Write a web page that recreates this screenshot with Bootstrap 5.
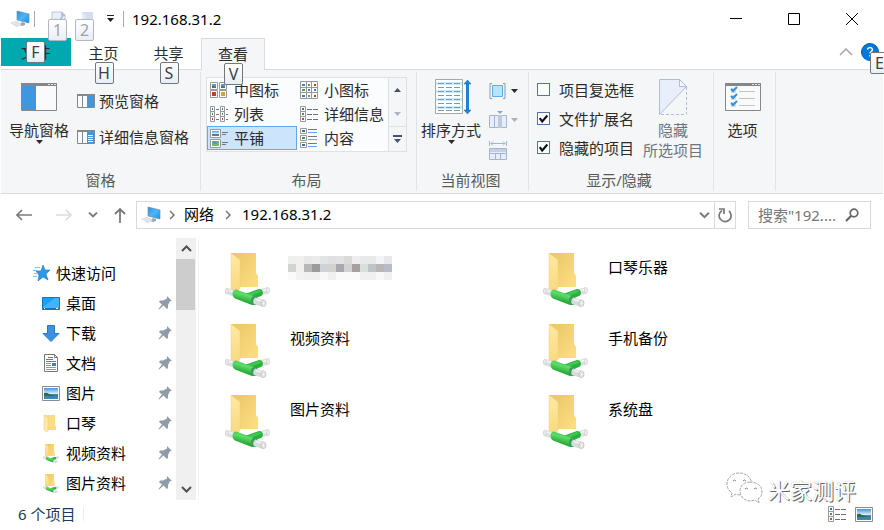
<!DOCTYPE html>
<html lang="zh-CN">
<head>
<meta charset="utf-8">
<meta name="viewport" content="width=device-width, initial-scale=1">
<title>192.168.31.2</title>
<link href="https://cdn.jsdelivr.net/npm/bootstrap@5.3.0/dist/css/bootstrap.min.css" rel="stylesheet">
<style>
body{font:15px/20px "Noto Sans","Noto Sans CJK SC",sans-serif;color:#000;background:#fff}
svg{display:block;flex:none}
.explorer{overflow:clip}
.explorer .btn{--bs-btn-padding-x:0;--bs-btn-padding-y:0;--bs-btn-border-width:0;--bs-btn-border-radius:0;--bs-btn-font-size:15px;--bs-btn-line-height:20px;--bs-btn-color:#2b2b2b;--bs-btn-hover-bg:#e5f1fb;white-space:nowrap}
.explorer .btn:disabled{opacity:1}
.explorer a{color:inherit;text-decoration:none}
/* title bar */
.titlebar{height:38px;padding-left:10px;padding-right:3px}
.vline{width:1px;height:16px;background:#aaa}
.win-btn{width:58px;height:38px}
/* tabs */
.tabs{height:31px;margin:0 1px}
.tabs .btn{width:65px;height:31px;padding-bottom:1px}
.tabs .tab-file{width:70px;height:28px;padding:0;background:#00a8b0}
.tabs .tab-view{width:64px;height:32px;background:#f5f6f7;border:1px solid #dadbdc;border-bottom:0;padding-bottom:2px}
.keytip{position:absolute;width:19px;height:22px;border:1px solid #747779;border-radius:2px;background:linear-gradient(#fff,#e8eef8);font-size:16px;line-height:20px;text-align:center;color:#3c3f45;z-index:5}
.keytip.faded{border-color:#b5b8bb;color:#a0a3a8}
.tip-below{left:50%;top:24px;margin-left:-9px}
.tip-file{left:25px;top:3px}
.tip-quick{left:-3px;top:8px}
.tip-help{left:9px;top:9px}
/* ribbon */
.ribbon{margin:0 1px;background:#f5f6f7;border-top:1px solid #dadbdc;border-bottom:1px solid #dadbdc;padding:2px 0}
.group{border-right:1px solid #e2e3e4;height:119px}
.group-panes{width:200px}
.group-layout{width:216px}
.group-view{width:112px}
.group-show{width:185px}
.group-options{width:62px}
.group-body{height:98px;padding-top:7px}
.group-name{color:#5a5a5a;text-align:center;line-height:20px}
.group-layout .group-name,.group-view .group-name,.group-show .group-name{padding-right:4px}
.big{display:flex;flex-direction:column;align-items:center}
.big .pic{height:36px;display:flex;align-items:center;margin-bottom:5px}
.gallery{border:1px solid #dfe1e3;background:#fbfcfe;height:75px;margin-top:-2px}
.gallery-wrap{padding-left:5px;padding-right:9px}
.gallery-items{display:grid;grid-template-columns:90px 1fr;grid-auto-rows:24px}
.gallery .btn{display:flex;align-items:center;gap:6px;padding-left:3px}
.gallery .btn.picked{background:#cce4fc;border:1px solid #66a7e8;padding-left:2px}
.gallery-scroll{width:18px;border-left:1px solid #dfe1e3;background:#f5f6f7}
.gallery-scroll .btn{height:24px;padding:0;justify-content:center}
.gallery-scroll .btn:last-child{border-top:1px solid #dfe1e3}
.options{margin:-4px 9px 0 0}
.option{height:29px;gap:9px;color:#2b2b2b}
.option .form-check-input{width:13px;height:13px;margin:0;border:1px solid #5575a8;border-radius:0;background-color:#fff}
.option .form-check-input:checked{background-color:#fff;background-image:url("data:image/svg+xml,%3Csvg xmlns='http://www.w3.org/2000/svg' viewBox='0 0 13 13'%3E%3Cpath d='M2 6l3 4L11 3' fill='none' stroke='%23111' stroke-width='2.500'/%3E%3C/svg%3E")}
/* address row */
.address-row{padding:7px 13px 9px 16px}
.address{height:28px;border:1px solid #d9d9d9;margin-left:10px}
.address a{padding-bottom:2px}
.refresh{width:21px;border-left:1px solid #d9d9d9!important;display:flex;align-items:center;justify-content:center}
.search{width:123px;height:28px;border:1px solid #d9d9d9;padding:0 11px 0 9px;margin-left:12px}
.search input{border:0;padding:0;font:inherit;color:#767676;background:none;outline:0;min-width:0}
.search input::placeholder{color:#767676}
/* content */
.side{width:176px;padding-top:20px}
.side a{height:30px;display:flex;align-items:center;gap:6px;padding:0 4px 0 42px}
.side a.quick{padding-left:33px}
.scroller{width:20px;background:#f0f0f0}
.scroller .btn{height:21px}
.thumb{height:51px;width:19px;background:#cdcdcd}
.files{display:grid;grid-template-columns:repeat(auto-fill,318px);grid-auto-rows:71px;align-content:start;padding:15px 0 0 26px;margin-left:2px;border-left:1px solid #f3f3f3}
.files a{display:flex;gap:20px}
.files .label{padding-top:4px}
.status{height:30px;padding:0 11px 2px 18px;color:#1e395b}
.status .end{width:1px;height:14px;background:#eee}
.watermark{position:absolute;right:28px;bottom:24px;font:22px/32px "Noto Sans CJK SC",sans-serif;color:#fff;text-shadow:1px 1px 0 #666,0 0 1px #bbb;z-index:4}
</style>
<script src="https://cdn.jsdelivr.net/npm/bootstrap@5.3.0/dist/js/bootstrap.bundle.min.js"></script>
</head>
<body>
<svg width="0" height="0" class="position-absolute" aria-hidden="true">
<defs>
<linearGradient id="gBlue" x2="1" y2="1"><stop stop-color="#2b8fe0"/><stop offset=".5" stop-color="#4db5f8"/><stop offset="1" stop-color="#1593ea"/></linearGradient>
<linearGradient id="gBack" x2="1" y2="1"><stop stop-color="#e9c566"/><stop offset="1" stop-color="#fddf83"/></linearGradient>
<linearGradient id="gFlap" x2="0" y2="1"><stop stop-color="#ffe9a2"/><stop offset="1" stop-color="#f9d980"/></linearGradient>
<linearGradient id="gGreen" gradientUnits="userSpaceOnUse" x1="21" y1="38" x2="18" y2="49"><stop stop-color="#3cc64c"/><stop offset=".35" stop-color="#5edd6c"/><stop offset="1" stop-color="#22a32d"/></linearGradient>
<linearGradient id="gSky" x2="0" y2="1"><stop stop-color="#4a90e8"/><stop offset=".5" stop-color="#d8ecfa"/><stop offset=".6" stop-color="#3d7f8c"/><stop offset="1" stop-color="#3e8ac4"/></linearGradient>
<symbol id="pc" viewBox="0 0 20 18"><path d="M7 1l12 3v9L7 10z" fill="url(#gBlue)" stroke="#7090a8" stroke-width=".7"/><path d="M12 12l3 1v2l-3 1-3-1z" fill="#9aa6b0"/><path d="M0 13l6-2 6 3-5 3z" fill="#d0d7dc"/><path d="M2 13l7 2.500M4 12l6 2.500" stroke="#fff" stroke-width=".6"/></symbol>
<symbol id="folder" viewBox="0 0 45 54"><path d="M6 0h25v20l2 3v11H6z" fill="url(#gBack)"/><path d="M6 0l9 7v28l-1 2-3 2-5-3z" fill="url(#gFlap)" stroke="#f2d078" stroke-width=".5"/>
<path d="M2 35l9 2-1 7-9-3q-2-4 1-6z" fill="#dcdddf"/><path d="M2 36l8 2v2l-8-2z" fill="#f1f1f2"/><ellipse cx="1.800" cy="38" rx="1.500" ry="2.800" fill="#e8e8e8" stroke="#c8c8c8" stroke-width=".5"/>
<path d="M36 36l7-2q2 3 0 7l-7 1z" fill="#dcdddf"/><path d="M37 37l6-2v2l-6 2z" fill="#f3f3f3"/><ellipse cx="43" cy="37.500" rx="1.600" ry="3" fill="#ededed" stroke="#c4c4c4" stroke-width=".5"/>
<path d="M20 41l14-5q3 0 4 3 0 3-2 4l-11 4z" fill="#27b03a"/><path d="M21 41.500L34 37l3 1.500L25 43z" fill="#3fc951"/>
<path d="M11 36.500q-3 0-3.500 3.500 0 4 2.500 5.500L27 52q4 0 4-4 1-4-2-5z" fill="url(#gGreen)"/><ellipse cx="29.500" cy="47.500" rx="3.500" ry="4.500" fill="#3d9a5c"/>
<path d="M30 44.500l9 2.500-1 7-9-3q-2-3 1-6.500z" fill="#d6dbdb"/><path d="M31 45.500l7 2v2l-7-2z" fill="#eff1f1"/><ellipse cx="38.500" cy="50.300" rx="2.500" ry="3.300" fill="#efefef" stroke="#b4b4b4" stroke-width=".7"/><ellipse cx="38.500" cy="50.500" rx="1" ry="1.600" fill="#fff" stroke="#c4c4c4" stroke-width=".5"/></symbol>
<symbol id="caret" viewBox="0 0 7 4"><path d="M0 0h7L3.500 4z" fill="currentColor"/></symbol>
<symbol id="pin" viewBox="0 0 14 14"><path d="M9 0l5 5-2 0-2 4v3l-1 1-3.500-3.500L1 13.500l-.5-.5L4 8.500 1 6l1-1.500h3l4-2z" fill="#8f9ba6"/></symbol>
<symbol id="photo" viewBox="0 0 18 15"><path d="M.5.500h17v14H.500z" fill="#fff" stroke="#8c8c8c"/><path d="M2 2h14v11H2z" fill="url(#gSky)"/><path d="M2 7q3-1 5 1l6 2H2z" fill="#2d6b4c"/></symbol>
<symbol id="pic" viewBox="0 0 8 8"><path d="M.5.500h7v7h-7z" fill="#fff" stroke="#999"/><path d="M2 2h4v4H2z" fill="#5596df"/><path d="M2 4l2 0 2 1v1H2z" fill="#3d8250"/></symbol>
<symbol id="details" viewBox="0 0 19 17"><path d="M.5.500h5v5h-5zM.5 5.500h5v5h-5zM.5 10.500h5v5h-5z" fill="#fff" stroke="#999"/><path d="M2 2h2v2H2z" fill="#3673ad"/><path d="M2 7h2v2H2z" fill="#4b9348"/><path d="M2 12h2v2H2z" fill="#c74632"/><path d="M7 3.500h5m1 0h5M7 8.500h5m1 0h5M7 13.500h5m1 0h5" stroke="#707070"/></symbol>
<symbol id="chev" viewBox="0 0 10 6"><path d="M1 .5l4 4 4-4" fill="none" stroke="currentColor" stroke-width="1.800"/></symbol>
</defs>
</svg>

<div class="explorer d-flex flex-column min-vh-100 position-relative">
<header class="titlebar d-flex align-items-center">
  <svg width="20" height="18"><use href="#pc"/></svg>
  <span class="vline ms-1"></span>
  <button class="btn position-relative ms-3" aria-label="属性"><svg width="15" height="17" viewBox="0 0 15 17"><path d="M1 1h10l3 3v12H1z" fill="#e9effa" stroke="#bbc5da"/><path d="M11 1v3h3M4 8l3 3 5-6" fill="none" stroke="#a9b8d4" stroke-width="1.500"/></svg><span class="keytip faded tip-quick">1</span></button>
  <button class="btn position-relative ms-2 ps-1" aria-label="新建文件夹"><svg class="ms-1" width="12" height="17" viewBox="0 0 12 17"><path d="M0 1h11v9l1 1v5H0z" fill="#d3dff1"/><path d="M0 1l4 3v12H0z" fill="#e1e9f6"/></svg><span class="keytip faded tip-quick ms-1">2</span></button>
  <button class="btn ms-2" aria-label="自定义快速访问工具栏"><svg class="ms-1" width="9" height="8" viewBox="0 0 9 8"><path d="M1 .500h7" stroke="#222"/><path d="M1 3h7L4.500 7z" fill="#222"/></svg></button>
  <span class="vline ms-2 me-2"></span>
  <span>192.168.31.2</span>
  <div class="ms-auto d-flex">
    <button class="btn win-btn d-flex align-items-center justify-content-center" aria-label="最小化"><svg width="12" height="12"><path d="M0 5.500h12" stroke="#000"/></svg></button>
    <button class="btn win-btn d-flex align-items-center justify-content-center" aria-label="最大化"><svg width="12" height="12"><path d="M.5.500h11v11H.500z" fill="none" stroke="#000"/></svg></button>
    <button class="btn win-btn d-flex align-items-center justify-content-center" aria-label="关闭"><svg width="12" height="12"><path d="M0 0l12 12M12 0L0 12" stroke="#000"/></svg></button>
  </div>
</header>

<nav class="tabs d-flex align-items-start" aria-label="功能区">
  <button class="btn tab-file position-relative">文件<span class="keytip tip-file">F</span></button>
  <button class="btn position-relative">主页<span class="keytip tip-below">H</span></button>
  <button class="btn position-relative">共享<span class="keytip tip-below">S</span></button>
  <button class="btn tab-view position-relative">查看<span class="keytip tip-below">V</span></button>
  <div class="ms-auto d-flex align-items-center h-100 pe-1 pb-1">
    <span class="me-2"><svg width="14" height="8" viewBox="0 0 14 8"><path d="M1 7l6-6 6 6" fill="none" stroke="#a5a5a5" stroke-width="1.500"/></svg></span>
    <span class="position-relative"><svg width="18" height="18" viewBox="0 0 18 18"><circle cx="9" cy="9" r="8.500" fill="#0078d7" stroke="#0063b1"/><path d="M6.500 6.500q.5-2 2.500-2t2.500 2q0 1.300-1.300 2Q9 9.300 9 10.500M9 12v1.500" fill="none" stroke="#fff" stroke-width="1.500"/></svg><span class="keytip tip-help">E</span></span>
  </div>
</nav>

<section class="ribbon d-flex">
  <div class="group group-panes">
    <div class="group-body d-flex">
      <button class="btn big ms-2"><span class="pic"><svg width="36" height="28" viewBox="0 0 36 28"><path d="M.5.500h35v27H.500z" fill="#fafafa" stroke="#85888b"/><path d="M0 0h36v3H0z" fill="#85888b"/><path d="M27 1.500h2m1 0h2m1 0h2" stroke="#ddd"/><path d="M1 3h14v24H1z" fill="#3f97e0"/></svg></span>导航窗格<svg width="7" height="4"><use href="#caret"/></svg></button>
      <div class="d-flex flex-column ms-2">
        <button class="btn d-flex align-items-center gap-1 mt-2 pt-1"><svg width="18" height="14" viewBox="0 0 18 14"><path d="M.5.500h17v13H.500zM5.500 2v11" fill="#fafafa" stroke="#85888b"/><path d="M0 0h18v2H0z" fill="#85888b"/><path d="M10 2h7v11h-7z" fill="#3f97e0"/></svg>预览窗格</button>
        <button class="btn d-flex align-items-center gap-1 mt-3"><svg width="18" height="14" viewBox="0 0 18 14"><path d="M.5.500h17v13H.500zM5.500 2v11" fill="#fafafa" stroke="#85888b"/><path d="M0 0h18v2H0z" fill="#85888b"/><path d="M10 2h7v11h-7z" fill="#3f97e0"/><path d="M11 5.500h5m-5 2h5m-5 2h5m-5 2h5" stroke="#e9f4fd"/></svg>详细信息窗格</button>
      </div>
    </div>
    <div class="group-name">窗格</div>
  </div>
  <div class="group group-layout">
    <div class="group-body gallery-wrap">
      <div class="gallery d-flex">
        <div class="gallery-items flex-grow-1">
          <button class="btn"><svg width="18" height="16" viewBox="0 0 18 16"><use href="#pic" width="8" height="8"/><use href="#pic" x="9" width="8" height="8"/><use href="#pic" y="8" width="8" height="8"/><use href="#pic" x="9" y="8" width="8" height="8"/><path d="M2 10h4v4H2z" fill="#c5401f"/><path d="M11 10h4v4h-4z" fill="#d5a13d"/></svg>中图标</button>
          <button class="btn"><svg width="18" height="18" viewBox="0 0 18 18"><path d="M.5.500h17v17H.500zM6.500 0v18M11.500 0v18M0 6.500h18M0 11.500h18" fill="#fff" stroke="#999"/><path d="M2 3h3v2H2zM8 8h2v2H8zM14 8h2v2h-2zM2 14h3v2H2z" fill="#3f7fc9"/><path d="M8 3h2v2H8zM2 8h3v2H2zM8 14h2v2H8z" fill="#5aa052"/><path d="M14 3h2v2h-2zM14 14h2v2h-2z" fill="#c43c22"/></svg>小图标</button>
          <button class="btn"><svg width="18" height="16" viewBox="0 0 18 16"><path d="M.5.500h4v15h-4zM.5 5.500h4m-4 5h4M10.500.500h4v15h-4zm0 5h4m-4 5h4" fill="#fff" stroke="#999"/><path d="M6 3.500h3m-3 5h3m-3 5h3m7-10h2m-2 5h2m-2 5h2" stroke="#777"/><path d="M2 2h1v2H2zm10 0h1v2h-1z" fill="#3673ad"/><path d="M2 7h1v2H2zm10 0h1v2h-1z" fill="#4b9348"/><path d="M2 12h1v2H2zm10 0h1v2h-1z" fill="#c74632"/></svg>列表</button>
          <button class="btn"><svg width="18" height="16" viewBox="0 0 18 16"><use href="#details" width="19" height="17"/></svg>详细信息</button>
          <button class="btn picked"><svg width="18" height="19" viewBox="0 0 18 19"><path d="M.5.500h10v8H.500zm0 10h10v8H.500z" fill="#fff" stroke="#999"/><path d="M2 2h7v5H2z" fill="url(#gSky)"/><path d="M2 12h7v5H2z" fill="#73b86d"/><path d="M2 12h4l1 3H4z" fill="#5a94d6"/><path d="M12 3.500h6m-6 2h4m-4 8h6m-6 2h4" stroke="#777"/></svg>平铺</button>
          <button class="btn"><svg width="18" height="20" viewBox="0 0 18 20"><path d="M.5.500h6v5h-6zm0 7h6v5h-6zm0 7h6v5h-6z" fill="#fff" stroke="#999"/><path d="M2 2h3v2H2zm0 14h3v2H2z" fill="#3673ad"/><path d="M2 9h3v2H2z" fill="#4b9348"/><path d="M8 1.500h9m-9 7h9m-9 7h9" stroke="#777"/><path d="M8 4.500h9m-9 7h9m-9 7h9" stroke="#69a3f0"/></svg>内容</button>
        </div>
        <div class="gallery-scroll flex-shrink-0">
          <button class="btn w-100" aria-label="向上"><svg width="7" height="4" viewBox="0 0 7 4"><path d="M0 4h7L3.500 0z" fill="#44546e"/></svg></button>
          <button class="btn w-100" aria-label="向下"><svg width="7" height="4" color="#abb4c2"><use href="#caret"/></svg></button>
          <button class="btn w-100" aria-label="更多"><svg width="9" height="8" viewBox="0 0 9 8"><path d="M0 1h9" stroke="#44546e" stroke-width="2"/><path d="M1 4h7L4.500 8z" fill="#44546e"/></svg></button>
        </div>
      </div>
    </div>
    <div class="group-name">布局</div>
  </div>
  <div class="group group-view">
    <div class="group-body d-flex ps-1">
      <button class="btn big"><span class="pic ps-1"><svg width="36" height="36" viewBox="0 0 36 36"><path d="M.5.500h27v34H.500z" fill="#fff" stroke="#a8a8a8"/><path d="M1 3h26v3H1zm0 8h26v3H1zm0 8h26v3H1zm0 8h26v3H1z" fill="#cdeaf8"/><path d="M3 4.500h22M3 8.500h22M3 12.500h22M3 16.500h22M3 20.500h22M3 24.500h22M3 28.500h22M3 31.500h22" stroke="#929292" stroke-dasharray="6 2"/><path d="M32.500 3v30" stroke="#1d83d8" stroke-width="3"/><path d="M29 5l3.500-4L36 5zM29 31l3.500 4L36 31z" fill="#1d83d8" stroke="#1769ad" stroke-width=".5"/></svg></span>排序方式<svg width="7" height="4"><use href="#caret"/></svg></button>
      <div class="d-flex flex-column ms-2">
        <button class="btn d-flex align-items-center gap-1 pt-1" aria-label="分组依据"><svg width="18" height="16" viewBox="0 0 18 16"><path d="M3 .500H1v15h2M14 .500h2v15h-2" fill="none" stroke="#8799ac"/><path d="M3.500 2.500h10v11h-10z" fill="#b8e2fd" stroke="#57aee8"/></svg><svg width="7" height="4"><use href="#caret"/></svg></button>
        <button class="btn d-flex align-items-center gap-1 mt-2 pt-1" disabled aria-label="添加列"><svg width="18" height="18" viewBox="0 0 18 18"><path d="M.5 4.500h17v12H.500zM5.500 4v13M11.500 4v13" fill="#e8eef9" stroke="#a5b4d0"/><path d="M9 4h4v13H9z" fill="#bfc9dd"/><path d="M8 0h6l-3 3z" fill="#8fa2c8"/></svg><svg width="7" height="4" color="#b0b0b0"><use href="#caret"/></svg></button>
        <button class="btn mt-2" disabled aria-label="调整列宽"><svg class="mt-1" width="18" height="20" viewBox="0 0 18 20"><path d="M.5 0v5m17-5v5M2 2.500h14M4 .500l-2 2 2 2M14 .500l2 2-2 2M.5 7.500h17v11H.500zM.5 12.500h17M6.500 12v6M11.500 12v6" fill="#e8eef9" stroke="#a5b4d0"/><path d="M1 8h16v3H1z" fill="#c4d0e8"/></svg></button>
      </div>
    </div>
    <div class="group-name">当前视图</div>
  </div>
  <div class="group group-show">
    <div class="group-body d-flex ps-2">
      <div class="options">
        <div class="option d-flex align-items-center"><input class="form-check-input" type="checkbox" id="optBoxes"><label for="optBoxes">项目复选框</label></div>
        <div class="option d-flex align-items-center"><input class="form-check-input" type="checkbox" id="optExt" checked><label for="optExt">文件扩展名</label></div>
        <div class="option d-flex align-items-center"><input class="form-check-input" type="checkbox" id="optHidden" checked><label for="optHidden">隐藏的项目</label></div>
      </div>
      <button class="btn big" disabled><span class="pic"><svg width="28" height="36" viewBox="0 0 28 36"><path d="M.5 35.500V.500h20l7 7z" fill="#e8effb" stroke="#afbdd8"/><path d="M20.500.500v7h7z" fill="#f5f8fd" stroke="#afbdd8"/><path d="M27.500 8v27.500H0" fill="none" stroke="#afbdd8" stroke-dasharray="3 2"/></svg></span><span class="text-secondary">隐藏<br>所选项目</span></button>
    </div>
    <div class="group-name">显示/隐藏</div>
  </div>
  <div class="group group-options">
    <div class="group-body d-flex justify-content-center pe-1">
      <button class="btn big"><span class="pic"><svg width="36" height="28" viewBox="0 0 36 28"><path d="M.5.500h35v27H.500z" fill="#fafafa" stroke="#85888b"/><path d="M0 0h36v3H0z" fill="#85888b"/><path d="M27 1.500h2m1 0h2m1 0h2" stroke="#ddd"/><path d="M6 5h5v5H6zM6 12h5v5H6zM6 19h5v5H6z" fill="#dcdcdc"/><path d="M6 6l2 2 4-4M6 13l2 2 4-4M6 20l2 2 4-4" fill="none" stroke="#2f93e4" stroke-width="2"/><path d="M14 8.500h16M14 15.500h16M14 22.500h16" stroke="#c4c4c4"/></svg></span>选项</button>
    </div>
  </div>
</section>

<div class="address-row d-flex align-items-center">
  <button class="btn" aria-label="后退"><svg width="16" height="12" viewBox="0 0 16 12"><path d="M6 1L1 6l5 5M1 6h15" fill="none" stroke="#7a7a7a" stroke-width="1.700"/></svg></button>
  <button class="btn ms-4" disabled aria-label="前进"><svg width="16" height="12" viewBox="0 0 16 12"><path d="M10 1l5 5-5 5M15 6H0" fill="none" stroke="#dcdcdc" stroke-width="1.700"/></svg></button>
  <button class="btn ms-3" aria-label="最近浏览的位置"><svg width="10" height="6" color="#7a7a7a"><use href="#chev"/></svg></button>
  <button class="btn ms-3" aria-label="向上"><svg width="12" height="15" viewBox="0 0 12 15"><path d="M1 6l5-5 5 5M6 1v14" fill="none" stroke="#7a7a7a" stroke-width="1.800"/></svg></button>
  <div class="address d-flex align-items-center flex-grow-1 ps-1">
    <svg width="20" height="18"><use href="#pc"/></svg>
    <svg class="mx-2" width="7" height="10" viewBox="0 0 7 10"><path d="M1 1l4 4-4 4" fill="none" stroke="#777" stroke-width="1.500"/></svg>
    <a href="#network">网络</a>
    <svg class="mx-2" width="12" height="10" viewBox="0 0 12 10"><path d="M4 1l4 4-4 4" fill="none" stroke="#777" stroke-width="1.500"/></svg>
    <a href="#host">192.168.31.2</a>
    <button class="btn ms-auto me-1" aria-label="展开地址"><svg width="11" height="7" color="#7a7a7a"><use href="#chev"/></svg></button>
    <button class="btn h-100 refresh" aria-label="刷新"><svg width="14" height="15" viewBox="0 0 14 15"><path d="M11 3a6 6 0 1 1-7-.500" fill="none" stroke="#777" stroke-width="1.700"/><path d="M1 1h5v5" fill="none" stroke="#777" stroke-width="1.700"/></svg></button>
  </div>
  <form class="search d-flex align-items-center gap-1">
    <input class="flex-grow-1 w-100" type="text" aria-label="搜索" placeholder="搜索&quot;192....">
    <svg width="14" height="14" viewBox="0 0 14 14"><circle cx="9" cy="5" r="3.800" fill="none" stroke="#666" stroke-width="1.700"/><path d="M6.500 7.500L1 13" stroke="#666" stroke-width="2.200"/></svg>
  </form>
</div>

<main class="d-flex flex-grow-1">
  <nav class="side flex-shrink-0" aria-label="导航窗格">
    <a class="quick" href="#quick"><svg width="17" height="16" viewBox="0 0 17 16"><path d="M10 0l2 5h5l-4 4 2 6-5-3-5 4 1-6-3-4h5z" fill="#2a9ae8" stroke="#1877bd" stroke-width=".6"/><path d="M2 2.500h5M0 5.500h4M1 8.500h3M0 11.500h4" stroke="#7dc2f2"/></svg>快速访问</a>
    <a href="#desktop"><svg width="18" height="13" viewBox="0 0 18 13"><path d="M.5.500h17v12H.500z" fill="#16a0f8" stroke="#0877c4"/><path d="M1 10l12-9h4v10H1z" fill="#45b3fb"/><path d="M1 11.500h16" stroke="#0877c4"/><path d="M2 11.500h1m11 0h2" stroke="#fff"/></svg>桌面<svg class="ms-auto" width="14" height="14"><use href="#pin"/></svg></a>
    <a href="#downloads"><svg width="18" height="17" viewBox="0 0 18 17"><path d="M5.500.500h7v8h4.500L9 16.500 1 8.500h4.500z" fill="#3b90e3" stroke="#2a78c4"/></svg>下载<svg class="ms-auto" width="14" height="14"><use href="#pin"/></svg></a>
    <a href="#documents"><svg width="18" height="18" viewBox="0 0 18 18"><path d="M2.500.500h10l3 3v14h-13z" fill="#fff" stroke="#777"/><path d="M12.500.500v3h3" fill="none" stroke="#777"/><path d="M6 3.500h5M4 5.500h7M4 7.500h10" stroke="#1e8fdd"/><path d="M4 9.500h5M4 11.500h5M4 13.500h10M4 15.500h10" stroke="#999"/><path d="M10 9h4v3h-4z" fill="#3f7fb9"/></svg>文档<svg class="ms-auto" width="14" height="14"><use href="#pin"/></svg></a>
    <a href="#pictures"><svg width="18" height="15"><use href="#photo"/></svg>图片<svg class="ms-auto" width="14" height="14"><use href="#pin"/></svg></a>
    <a href="#harmonica"><svg width="18" height="17" viewBox="0 0 18 17"><path d="M2 0h11v10l1 1v4H2z" fill="#fbdc82"/><path d="M2 0l4 3v12l-1 2-3-2z" fill="#ffe9ab" stroke="#efcb6b" stroke-width=".5"/></svg>口琴<svg class="ms-auto" width="14" height="14"><use href="#pin"/></svg></a>
    <a href="#video"><svg width="18" height="19"><use href="#folder"/></svg>视频资料<svg class="ms-auto" width="14" height="14"><use href="#pin"/></svg></a>
    <a href="#photos"><svg width="18" height="19"><use href="#folder"/></svg>图片资料<svg class="ms-auto" width="14" height="14"><use href="#pin"/></svg></a>
  </nav>
  <div class="scroller d-flex flex-column flex-shrink-0">
    <button class="btn d-flex align-items-center justify-content-center" aria-label="向上滚动"><svg width="11" height="7" viewBox="0 0 11 7"><path d="M1 6l4.500-4.500L10 6" fill="none" stroke="#505050" stroke-width="2"/></svg></button>
    <div class="thumb"></div>
    <button class="btn d-flex align-items-center justify-content-center mt-auto" aria-label="向下滚动"><svg width="11" height="7" viewBox="0 0 11 7"><path d="M1 1l4.500 4.500L10 1" fill="none" stroke="#505050" stroke-width="2"/></svg></button>
  </div>
  <div class="files flex-grow-1">
    <a href="#share" aria-label="共享文件夹"><svg width="45" height="54"><use href="#folder"/></svg>
      <svg width="106" height="27" viewBox="2 -3 106 27" overflow="visible" shape-rendering="crispEdges">
        <g fill="none" stroke-width="8">
        <path d="M0 4h8" stroke="#eeefef"/><path d="M8 4h8" stroke="#f1f0f0"/><path d="M16 4h8" stroke="#e8e8e8"/><path d="M24 4h8" stroke="#ebebeb"/><path d="M32 4h8" stroke="#e2e4e6"/><path d="M40 4h8" stroke="#dfe0e2"/><path d="M48 4h8" stroke="#e2e2e2"/><path d="M56 4h8" stroke="#dadbd9"/><path d="M64 4h8" stroke="#eeeef0"/><path d="M72 4h8" stroke="#e9e9eb"/><path d="M80 4h8" stroke="#e8eaea"/><path d="M88 4h8" stroke="#f2f4f8"/><path d="M96 4h8" stroke="#e8e8ea"/>
        <path d="M0 12h8" stroke="#d2d4d2"/><path d="M8 12h8" stroke="#f1f0ee"/><path d="M16 12h8" stroke="#b8b8b8"/><path d="M24 12h8" stroke="#9c9b9b"/><path d="M32 12h8" stroke="#cfd3d8"/><path d="M40 12h8" stroke="#d4d2ce"/><path d="M48 12h8" stroke="#a9a8b0"/><path d="M56 12h8" stroke="#d2d2d4"/><path d="M64 12h8" stroke="#a8a0a0"/><path d="M72 12h8" stroke="#d9dfda"/><path d="M80 12h8" stroke="#bec4ca"/><path d="M88 12h8" stroke="#b8b7b5"/><path d="M96 12h8" stroke="#b8bcc8"/>
        <path d="M0 20h8m40 0h24" stroke="#fafafa"/><path d="M8 20h8" stroke="#f3f2f0"/><path d="M16 20h16m8 0h8m24 0h16m8 0h8" stroke="#f0f0f0"/><path d="M32 20h8m48 0h8" stroke="#f7f8f9"/>
        </g>
      </svg></a>
    <a href="#instruments"><svg width="45" height="54"><use href="#folder"/></svg><span class="label">口琴乐器</span></a>
    <a href="#video-files"><svg width="45" height="54"><use href="#folder"/></svg><span class="label">视频资料</span></a>
    <a href="#phone"><svg width="45" height="54"><use href="#folder"/></svg><span class="label">手机备份</span></a>
    <a href="#photo-files"><svg width="45" height="54"><use href="#folder"/></svg><span class="label">图片资料</span></a>
    <a href="#system"><svg width="45" height="54"><use href="#folder"/></svg><span class="label">系统盘</span></a>
  </div>
</main>

<footer class="status d-flex align-items-center">
  <span>6 个项目</span><span class="end ms-2"></span>
  <button class="btn ms-auto me-2" aria-label="详细信息"><svg width="19" height="17"><use href="#details"/></svg></button>
  <button class="btn" aria-label="缩略图"><svg width="18" height="15"><use href="#photo"/></svg></button>
</footer>

<div class="watermark d-flex align-items-center gap-1">
  <svg width="38" height="34" viewBox="0 0 38 34"><g fill="#fff" stroke="#8f8f8f" stroke-width=".8" stroke-dasharray="3 1"><path d="M13 1C6 1 1 6 1 12c0 4 2 7 5 9l-1 4 5-3q2 1 5 1 11-1 11-11C25 5 20 1 13 1z"/><path d="M24 10c-6 0-10 4-10 9s4 10 10 10l5-1 4 3-1-4c3-2 4-4 4-8 0-5-5-9-12-9z"/></g><path d="M7 9q1-2 3 0m7 0q1-2 3 0M19 17q1-2 3 0m6 0q1-2 3 0" fill="none" stroke="#888"/></svg>
  <span>米家测评</span>
</div>
</div>
</body>
</html>
